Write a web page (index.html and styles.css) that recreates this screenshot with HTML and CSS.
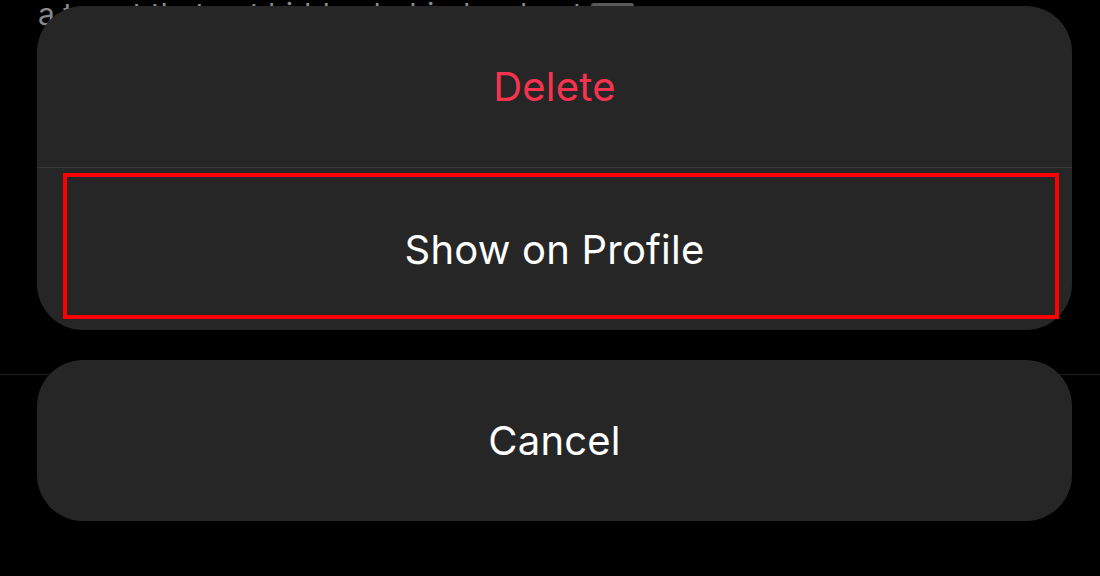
FILE: index.html
```html
<!DOCTYPE html>
<html>
<head>
<meta charset="utf-8">
<link rel="stylesheet" href="styles.css">
</head>
<body>
<div class="screen">
  <div class="backdrop">
    <div class="bg-text">a tweet that got hidden behind a sheet <span class="bg-chip"></span></div>
    <div class="bg-rule"></div>
  </div>
  <div class="sheet">
    <div class="group">
      <div class="action destructive">Delete</div>
      <div class="action">Show on Profile</div>
    </div>
    <div class="group">
      <div class="action cancel">Cancel</div>
    </div>
  </div>
  <div class="highlight"></div>
</div>
</body>
</html>
```

FILE: styles.css
```css
html, body {
  margin: 0;
  padding: 0;
  background: #000;
}
.screen {
  position: relative;
  width: 1100px;
  height: 576px;
  overflow: hidden;
  background: #000;
  font-family: Inter, "Noto Sans", sans-serif;
}
.backdrop {
  display: flex;
  flex-direction: column;
}
.bg-text {
  color: #8a8a8a;
  font-size: 30px;
  line-height: 36px;
  margin-top: -4px;
  padding-left: 38px;
  white-space: nowrap;
}
.bg-chip {
  display: inline-block;
  width: 43px;
  height: 26px;
  background: #5a5a5a;
  border-radius: 3px;
  vertical-align: top;
  margin-top: 7px;
}
.bg-rule {
  margin-top: 342px;
  height: 1px;
  background: #1c1c1c;
}
.sheet {
  position: absolute;
  left: 37px;
  top: 6px;
  width: 1035px;
  display: flex;
  flex-direction: column;
  gap: 30px;
}
.group {
  background: #262626;
  border-radius: 46px;
  overflow: hidden;
  display: flex;
  flex-direction: column;
}
.action {
  height: 161px;
  display: flex;
  align-items: center;
  justify-content: center;
  color: #ffffff;
  font-size: 40px;
  letter-spacing: 0.2px;
}
.action + .action {
  border-top: 1px solid #3a3a3a;
  height: 162px;
}
.destructive {
  color: #f8334f;
}
.highlight {
  position: absolute;
  left: 63px;
  top: 173px;
  width: 988px;
  height: 138px;
  border: 4px solid #ff0000;
}
```
